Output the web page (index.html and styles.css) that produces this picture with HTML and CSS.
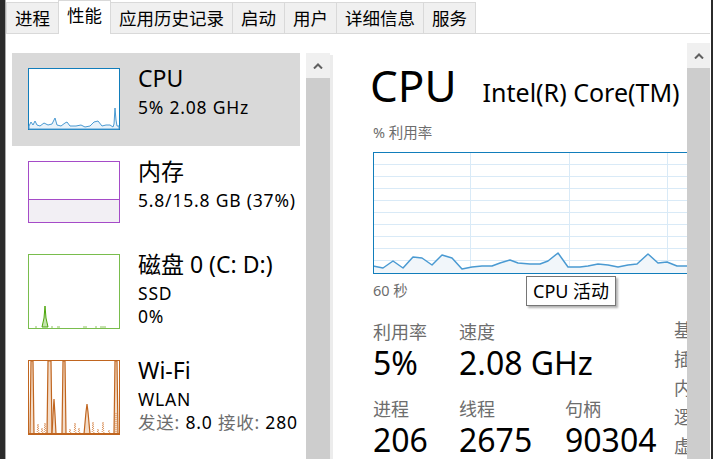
FILE: index.html
```html
<!DOCTYPE html>
<html lang="zh-CN">
<head>
  <meta charset="UTF-8">
  <title>任务管理器 - 性能</title>
  <link rel="stylesheet" href="styles.css">
</head>
<body>
<div class="frame">
  <div class="edge-left"></div>
  <div class="window">

    <nav class="tabs">
      <div class="tab">进程</div>
      <div class="tab active">性能</div>
      <div class="tab">应用历史记录</div>
      <div class="tab">启动</div>
      <div class="tab">用户</div>
      <div class="tab">详细信息</div>
      <div class="tab">服务</div>
    </nav>

    <div class="content">
      <aside class="sidebar">
        <div class="list">
          <div class="item selected">
            <svg class="thumb cpu" width="92" height="62" viewBox="0 0 92 62">
              <rect x="0.5" y="0.5" width="91" height="61" fill="#fff" stroke="#117dbb"/>
              <polygon points="1,58 3,54 5,57 7,53 9,57 12,58 16,55 20,57 24,56 27,50 29,57 33,58 37,55 39,54 42,58 48,58 53,57 57,59 62,58 66,54 70,53 74,58 78,57 82,57 85,59 86,56 87,40 88,52 89,58 91,58 91,61 1,61" fill="#eaf3fa" stroke="#4a9ad2" stroke-width="1"/>
            </svg>
            <div class="info">
              <div class="name">CPU</div>
              <div class="sub">5% 2.08 GHz</div>
            </div>
          </div>

          <div class="item">
            <svg class="thumb" width="92" height="62" viewBox="0 0 92 62">
              <rect x="0.5" y="0.5" width="91" height="61" fill="#fff" stroke="#a54bc8"/>
              <rect x="1" y="38" width="90" height="23" fill="#f2eff4"/>
              <line x1="1" y1="38.5" x2="91" y2="38.5" stroke="#a54bc8"/>
            </svg>
            <div class="info">
              <div class="name">内存</div>
              <div class="sub">5.8/15.8 GB (37%)</div>
            </div>
          </div>

          <div class="item">
            <svg class="thumb" width="92" height="75" viewBox="0 0 92 75">
              <rect x="0.5" y="0.5" width="91" height="74" fill="#fff" stroke="#79bd4d"/>
              <polygon points="14,73 16,64 17,52 18,64 20,73" fill="#c5e3ae" stroke="#4da60c"/>
              <path d="M7 73h2M23 73h2M29 73h3M55 73h4M67 73h2M72 73h6" stroke="#8cc35e"/>
            </svg>
            <div class="info">
              <div class="name">磁盘 0 (C: D:)</div>
              <div class="sub">SSD</div>
              <div class="sub">0%</div>
            </div>
          </div>

          <div class="item">
            <svg class="thumb" width="92" height="75" viewBox="0 0 92 75">
              <rect x="0.5" y="0.5" width="91" height="74" fill="#fff" stroke="#c0651f"/>
              <g fill="#f3dcc8" stroke="#c0651f" stroke-width="1.2">
                <polygon points="2,74 3,1 5,1 6,74"/>
                <polygon points="19,74 20,1 23,1 24,74"/>
                <polygon points="24,74 25,55 26,39 27,55 28,74"/>
                <polygon points="34,74 35,1 37,1 38,74"/>
                <polygon points="56,74 58,52 59,44 60,52 62,74"/>
                <polygon points="86,74 87,1 89,1 90,74"/>
              </g>
              <g stroke="#d98a4f" stroke-width="1" stroke-dasharray="1 1" fill="none">
                <path d="M9 74l1-10 1 10M16 74l1-11 1 11M46 74l1-11 1 11M64 74l1-12 1 12M74 74l1-12 1 12M88 74l0-22"/>
                <path d="M13 74l1-6 1 6M41 74l1-5 1 5M50 74l1-6 1 6M69 74l1-5 1 5M80 74l1-4 1 4"/>
              </g>
              <line x1="1" y1="73.5" x2="91" y2="73.5" stroke="#c0651f"/>
            </svg>
            <div class="info">
              <div class="name">Wi-Fi</div>
              <div class="sub">WLAN</div>
              <div class="sub"><span class="muted">发送:</span> 8.0 <span class="muted">接收:</span> 280</div>
            </div>
          </div>
        </div>

        <div class="scrollbar">
          <div class="arrow">
            <svg width="10" height="6" viewBox="0 0 10 6"><path d="M1 5.5L5 1.5 9 5.5" fill="none" stroke="#606060" stroke-width="2"/></svg>
          </div>
          <div class="bar"></div>
        </div>
      </aside>

      <div class="divider"></div>

      <section class="detail">
        <div class="detail-body">
          <div class="heading">
            <span class="title">CPU</span>
            <span class="model">Intel(R) Core(TM)</span>
          </div>

          <div class="caption">% 利用率</div>

          <div class="chart-wrap">
            <svg class="chart" width="480" height="122" viewBox="0 0 480 122">
              <g stroke="#d9eaf7" stroke-width="1">
                <path d="M0 12.5h480M0 24.5h480M0 36.5h480M0 48.5h480M0 60.5h480M0 72.5h480M0 84.5h480M0 96.5h480M0 108.5h480"/>
                <path d="M97.5 0v122M196.5 0v122M294.5 0v122M393.5 0v122"/>
              </g>
              <polygon fill="#f1f6fa" stroke="#4a9ad2" stroke-width="1.5" stroke-linejoin="round"
                points="0,114 10,116 20,109 30,116 40,105 49,106 59,113 69,103 79,106 89,117 99,115 109,114 119,114 127,111 137,108 145,111 157,112 167,112 175,109 185,101 195,115 207,115 215,114 225,112 235,113 245,115 255,113 264,112 275,102 285,111 294,110 304,114 320,114 320,122 0,122"/>
              <rect x="0.5" y="0.5" width="479" height="121" fill="none" stroke="#117dbb"/>
            </svg>
            <div class="tooltip">CPU 活动</div>
          </div>

          <div class="caption axis">60 秒</div>

          <div class="stats">
            <div class="stats-main">
              <div class="row">
                <div class="stat w1"><div class="label">利用率</div><div class="value">5%</div></div>
                <div class="stat w2"><div class="label">速度</div><div class="value">2.08 GHz</div></div>
              </div>
              <div class="row">
                <div class="stat w1"><div class="label">进程</div><div class="value">206</div></div>
                <div class="stat w2"><div class="label">线程</div><div class="value">2675</div></div>
                <div class="stat"><div class="label">句柄</div><div class="value">90304</div></div>
              </div>
            </div>
            <div class="specs">
              <div>基准速度:</div>
              <div>插槽:</div>
              <div>内核:</div>
              <div>逻辑处理器:</div>
              <div>虚拟化:</div>
            </div>
          </div>
        </div>

        <div class="scrollbar right">
          <div class="arrow">
            <svg width="10" height="6" viewBox="0 0 10 6"><path d="M1 5.5L5 1.5 9 5.5" fill="none" stroke="#606060" stroke-width="2"/></svg>
          </div>
          <div class="bar"></div>
        </div>
      </section>
    </div>

  </div>
  <div class="edge-right"></div>
</div>
</body>
</html>
```

FILE: styles.css
```css
body {
  margin: 0;
  font-family: "Noto Sans", "Noto Sans CJK SC", sans-serif;
  color: #000;
  background-color: #fff;
  overflow: hidden;
}

.frame {
  display: flex;
  height: 459px;
}

.edge-left {
  width: 5px;
  background-color: #2b2b2b;
  border-right: 1px solid #a9a9a9;
}

.edge-right {
  width: 2px;
  margin: 0 1px;
  background-color: #2b2b2b;
}

.window {
  flex: 1;
  min-width: 0;
  display: flex;
  flex-direction: column;
}

/* tabs */

.tabs {
  display: flex;
  align-items: flex-end;
  height: 33px;
  border-bottom: 1px solid #d9d9d9;
  font-family: "Noto Sans CJK SC", sans-serif;
  font-size: 17.5px;
}

.tab {
  height: 30px;
  line-height: 30px;
  padding: 0 8px;
  margin-right: -1px;
  background-color: #f0f0f0;
  border: 1px solid #d9d9d9;
  border-bottom: none;
  color: #000;
}

.tab.active {
  position: relative;
  height: 33px;
  line-height: 28px;
  margin-bottom: -1px;
  background-color: #fff;
  z-index: 1;
}

/* layout */

.content {
  flex: 1;
  display: flex;
  min-height: 0;
}

.sidebar {
  width: 324px;
  display: flex;
}

.list {
  width: 300px;
  padding-top: 19px;
}

.item {
  display: flex;
  align-items: flex-start;
  margin: 0 6px;
  padding: 15px 0 16px 16px;
  overflow: hidden;
}

.item.selected {
  background-color: #d9d9d9;
}

.thumb {
  display: block;
  flex: none;
}

.info {
  margin-left: 18px;
}

.name {
  font-size: 23px;
  line-height: 26px;
  margin-top: -3px;
  white-space: nowrap;
}

.sub {
  font-size: 17.5px;
  letter-spacing: 0.8px;
  line-height: 23px;
  white-space: nowrap;
}

.name + .sub {
  margin-top: 5px;
}

.muted {
  color: #6d6d6d;
}

.scrollbar {
  width: 24px;
  margin-top: 19px;
  display: flex;
  flex-direction: column;
}

.scrollbar.right {
  width: 23px;
  margin-top: 9px;
}

.arrow {
  height: 25px;
  display: flex;
  align-items: center;
  justify-content: center;
  background-color: #f0f0f0;
}

.bar {
  flex: 1;
  background-color: #cdcdcd;
}

.divider {
  width: 3px;
  margin-top: 21px;
  background-color: #ececec;
}

/* detail */

.detail {
  flex: 1;
  min-width: 0;
  display: flex;
}

.detail-body {
  flex: 1;
  min-width: 0;
  overflow: hidden;
  padding: 26px 0 0 40px;
}

.heading {
  display: flex;
  align-items: baseline;
  white-space: nowrap;
}

.title {
  font-size: 44px;
  line-height: 50px;
  margin-left: -3px;
}

.model {
  font-size: 25px;
  margin-left: 26px;
}

.caption {
  font-size: 14.5px;
  color: #6d6d6d;
  line-height: 20px;
  margin-top: 12px;
}

.chart-wrap {
  position: relative;
  margin-top: 10px;
  width: 480px;
  height: 122px;
}

.chart {
  display: block;
}

.tooltip {
  position: absolute;
  left: 153px;
  top: 124px;
  padding: 0 6px;
  height: 28px;
  line-height: 28px;
  font-size: 18px;
  background-color: #fff;
  border: 1px solid #767676;
  box-shadow: 2px 2px 2px rgba(0, 0, 0, 0.3);
  white-space: nowrap;
}

.axis {
  margin-top: 6px;
}

.stats {
  display: flex;
  margin-top: 20px;
}

.stats-main {
  width: 301px;
  flex: none;
}

.row {
  display: flex;
}

.row + .row {
  margin-top: 16px;
}

.stat.w1 {
  width: 86px;
}

.stat.w2 {
  width: 106px;
}

.label {
  font-size: 18px;
  line-height: 24px;
  color: #6d6d6d;
}

.value {
  font-size: 32px;
  line-height: 36px;
  margin-top: 1px;
  white-space: nowrap;
}

.specs {
  flex: none;
  font-size: 18px;
  line-height: 24px;
  color: #6d6d6d;
  white-space: nowrap;
  margin-top: -2px;
}

.specs div {
  height: 29px;
}
```
